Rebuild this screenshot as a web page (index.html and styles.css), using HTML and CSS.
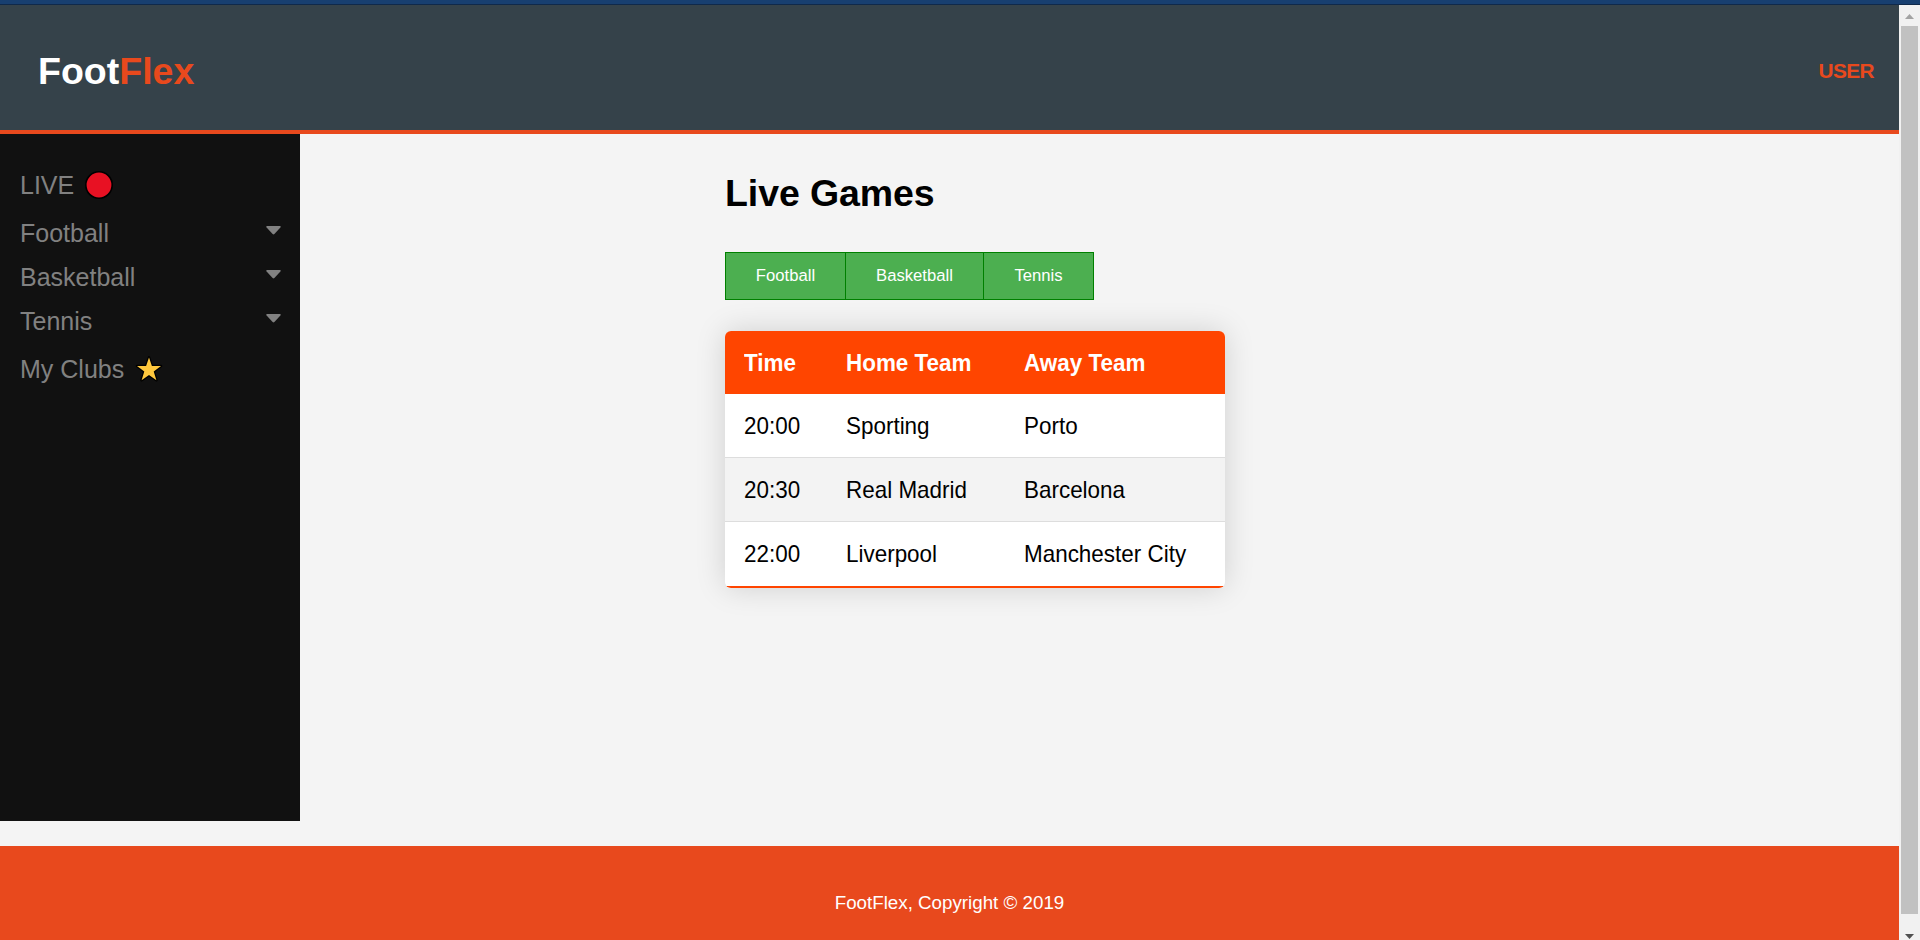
FILE: index.html
```html
<!DOCTYPE html>
<html lang="en">
<head>
<meta charset="utf-8">
<title>FootFlex</title>
<link rel="stylesheet" href="styles.css">
</head>
<body>
<div class="top-strip"></div>
<div class="viewport">
  <div class="page">
    <header class="header">
      <h1 class="brand">Foot<span class="brand-accent">Flex</span></h1>
      <a class="user">USER</a>
    </header>
    <div class="body">
      <nav class="sidebar">
        <a class="nav-item nav-live">LIVE
          <svg class="live-icon" width="28" height="28" viewBox="0 0 28 28"><circle cx="14" cy="14" r="13.2" fill="#e81123" stroke="#000" stroke-width="1.6"/></svg>
        </a>
        <a class="nav-item">Football <svg class="caret" width="15" height="9" viewBox="0 0 15 9"><path d="M1 0H14Q15.200 .4 14.400 1.500L8.400 8.100Q7.500 9 6.600 8.100L.6 1.500Q-.2 .4 1 0Z"/></svg></a>
        <a class="nav-item">Basketball <svg class="caret" width="15" height="9" viewBox="0 0 15 9"><path d="M1 0H14Q15.200 .4 14.400 1.500L8.400 8.100Q7.500 9 6.600 8.100L.6 1.500Q-.2 .4 1 0Z"/></svg></a>
        <a class="nav-item">Tennis <svg class="caret" width="15" height="9" viewBox="0 0 15 9"><path d="M1 0H14Q15.200 .4 14.400 1.500L8.400 8.100Q7.500 9 6.600 8.100L.6 1.500Q-.2 .4 1 0Z"/></svg></a>
        <a class="nav-item nav-clubs">My Clubs
          <svg class="star-icon" width="28" height="26" viewBox="0 0 28 26"><path d="M14 1.400L16.900 10H26L18.700 15.400L21.400 24.200L14 19L6.600 24.200L9.300 15.400L2 10H11.100Z" fill="#ffc83d" stroke="#000" stroke-width="2.600" stroke-linejoin="round" paint-order="stroke"/></svg>
        </a>
      </nav>
      <main class="main">
        <h1 class="title">Live Games</h1>
        <div class="btn-group">
          <button class="btn btn-football">Football</button>
          <button class="btn btn-basketball">Basketball</button>
          <button class="btn btn-tennis">Tennis</button>
        </div>
        <table class="games">
          <thead>
            <tr><th class="col-time"><span class="cell">Time</span></th><th class="col-home"><span class="cell">Home Team</span></th><th><span class="cell">Away Team</span></th></tr>
          </thead>
          <tbody>
            <tr><td><span class="cell">20:00</span></td><td><span class="cell">Sporting</span></td><td><span class="cell">Porto</span></td></tr>
            <tr><td><span class="cell">20:30</span></td><td><span class="cell">Real Madrid</span></td><td><span class="cell">Barcelona</span></td></tr>
            <tr><td><span class="cell">22:00</span></td><td><span class="cell">Liverpool</span></td><td><span class="cell">Manchester City</span></td></tr>
          </tbody>
        </table>
      </main>
    </div>
    <footer class="footer">FootFlex, Copyright © 2019</footer>
  </div>
  <div class="scrollbar">
    <svg class="arrow-up" width="9" height="5" viewBox="0 0 9 5"><path d="M0 5L4.500 0L9 5Z"/></svg>
    <div class="thumb"></div>
    <svg class="arrow-down" width="9" height="5" viewBox="0 0 9 5"><path d="M0 0H9L4.500 5Z"/></svg>
  </div>
</div>
</body>
</html>
```
FILE: styles.css
```css
* { box-sizing: border-box; }
body {
  margin: 0;
  height: 940px;
  overflow: hidden;
  display: flex;
  flex-direction: column;
  background: #f4f4f4;
  font-family: "Liberation Sans", Arial, Helvetica, sans-serif;
}
.top-strip { height: 5px; flex: none; background: #183f70; border-bottom: 1px solid #10294a; }
.viewport { flex: 1; min-height: 0; display: flex; }
.page { flex: 1; display: flex; flex-direction: column; }

.header {
  height: 129px;
  flex: none;
  display: flex;
  justify-content: space-between;
  align-items: center;
  padding: 7px 25px 0 38px;
  background: #35424a;
  border-bottom: 4px solid #e8491d;
}
.brand { margin: 0; font-size: 37.5px; line-height: 43px; color: #fff; }
.brand-accent, .user { color: #e8491d; }
.user { font-size: 20.8px; letter-spacing: -.55px; font-weight: bold; line-height: 23px; padding-bottom: 2px; }

.body { display: flex; height: 712px; flex: none; }
.sidebar { width: 300px; height: 687px; flex: none; padding: 31px 20px 0; background: #111; }
.nav-item {
  display: flex;
  align-items: center;
  height: 44px;
  font-size: 25px;
  line-height: 30px;
  color: #818181;
}
.nav-live { height: 40px; margin-bottom: 6px; }
.nav-clubs { margin-top: 4px; }
.live-icon { margin-left: 10.5px; }
.star-icon { margin-left: 10.5px; }
.caret { margin: 0 -.6px 5px auto; fill: #818181; }

.main { padding: 38px 0 0 425px; }
.title { margin: 0; font-size: 37.5px; line-height: 43px; letter-spacing: -.1px; color: #000; }
.btn-group { display: flex; margin-top: 37px; }
.btn {
  height: 48px;
  padding: 0;
  border: 1px solid #008000;
  border-right: 0;
  background: #4caf50;
  color: #fff;
  font: 16.67px "Liberation Sans", Arial, sans-serif;
}
.btn-football { width: 120px; }
.btn-basketball { width: 138px; }
.btn-tennis { width: 111px; border-right: 1px solid #008000; }

.games {
  width: 500px;
  margin-top: 31px;
  table-layout: fixed;
  border-collapse: separate;
  border-spacing: 0;
  border-radius: 6px;
  overflow: hidden;
  font-size: 24px;
  text-align: left;
  white-space: nowrap;
  background: #fff;
  box-shadow: 0 0 30px rgba(0, 0, 0, .15);
}
.col-time { width: 102px; }
.col-home { width: 178px; }
.games th, .games td { height: 64px; padding: 0 0 0 18.5px; line-height: 28px; }
.games th { height: 63px; background: #ff4500; color: #fff; }
.games td { border-bottom: 1px solid #ddd; color: #000; }
.games tr:nth-child(2) td { background: #f3f3f3; }
.games tr:last-child td { height: 66px; border-bottom: 2px solid #ff4500; }
.cell { display: inline-block; transform: scaleX(.935); transform-origin: 0 50%; }

.footer { flex: 1; padding-top: 46px; background: #e8491d; color: #fff; font-size: 18.75px; line-height: 22px; text-align: center; }

.scrollbar {
  width: 21px;
  flex: none;
  display: flex;
  flex-direction: column;
  align-items: center;
  padding-top: 9px;
  background: #f1f1f1;
}
.arrow-up { fill: #a3a3a3; flex: none; }
.thumb { width: 17px; height: 888px; margin-top: 7px; flex: none; background: #c1c1c1; }
.arrow-down { fill: #505050; margin-top: 20px; flex: none; }
```
